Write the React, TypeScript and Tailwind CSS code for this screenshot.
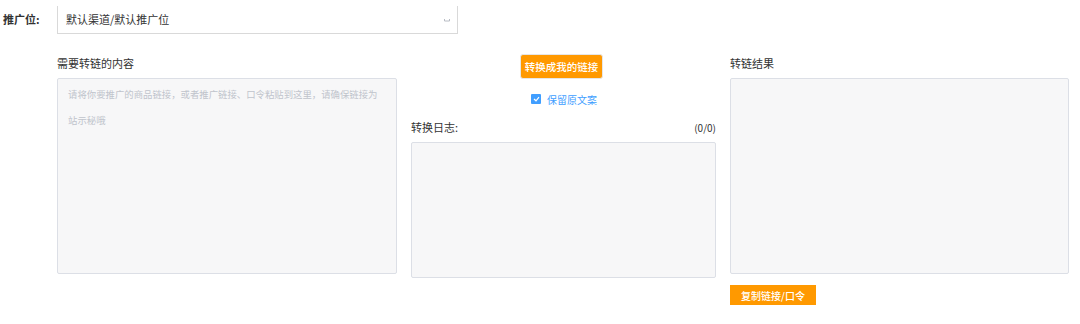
import React from "react";

const font = { fontFamily: '"Noto Sans CJK SC", "Noto Sans", sans-serif' };

export default function App() {
  return (
    <div
      className="w-[1080px] h-[324px] bg-white text-[#333] overflow-hidden"
      style={font}
    >
      {/* Row 1 */}
      <div className="flex items-start pt-[6px]">
        <div className="w-[57px] pl-[3px] h-[27px] flex items-center text-[11px] font-bold text-[#333]">
          推广位:
        </div>
        <div className="w-[401px] h-[28px] border-x border-b border-[#d9d9d9] flex items-center pl-[8px] pr-[7px] text-[11px] text-[#333]">
          <span className="flex-1">默认渠道/默认推广位</span>
          <svg width="6" height="4" viewBox="0 0 6 4" className="mt-[1px]">
            <path d="M0.5 1 L0.5 3 L5.5 3 L5.5 1" fill="none" stroke="#b8bcc4" strokeWidth="1" />
          </svg>
        </div>
      </div>

      {/* Row 2 */}
      <div className="flex items-start pl-[57px] mt-[20px]">
        {/* Left */}
        <div className="w-[340px] flex flex-col">
          <div className="h-[18px] leading-[18px] text-[11px] text-[#333]">需要转链的内容</div>
          <div className="mt-[6px] h-[196px] bg-[#f7f7f8] border border-[#dcdfe6] rounded-[2px] pl-[10px] pt-[2px] text-[9.4px] leading-[26px] text-[#c0c4cc] whitespace-nowrap">
            <div>请将你要推广的商品链接，或者推广链接、口令粘贴到这里，请确保链接为</div>
            <div>站示秘哦</div>
          </div>
        </div>

        {/* Middle */}
        <div className="w-[305px] ml-[14px] flex flex-col">
          <div className="ml-[109px] w-[83px] h-[25px] bg-[#f90] border border-[#e6e6e6] rounded-[3px] flex items-center justify-center text-white text-[10.5px] font-medium">
            转换成我的链接
          </div>
          <div className="mt-[13px] h-[14px] flex items-center pl-[120px]">
            <div className="w-[10px] h-[10px] bg-[#409eff] rounded-[1px] flex items-center justify-center">
              <svg width="7" height="6" viewBox="0 0 7 6">
                <path d="M1 3 L3 4.8 L6 1.2" fill="none" stroke="white" strokeWidth="1.2" />
              </svg>
            </div>
            <span className="ml-[6px] text-[10px] text-[#409eff]">保留原文案</span>
          </div>
          <div className="mt-[13px] h-[16px] flex items-center justify-between text-[11px] text-[#333]">
            <span>转换日志:</span>
            <span className="text-[10px]">(0/0)</span>
          </div>
          <div className="mt-[7px] h-[136px] bg-[#f7f7f8] border border-[#dcdfe6] rounded-[2px]"></div>
        </div>

        {/* Right */}
        <div className="w-[339px] ml-[14px] flex flex-col">
          <div className="h-[18px] leading-[18px] text-[11px] text-[#333]">转链结果</div>
          <div className="mt-[6px] h-[196px] bg-[#f7f7f8] border border-[#dcdfe6] rounded-[2px]"></div>
          <div className="mt-[11px] w-[86px] h-[20px] bg-[#f90] flex items-center justify-center text-white text-[10px] font-medium">
            复制链接/口令
          </div>
        </div>
      </div>
    </div>
  );
}
